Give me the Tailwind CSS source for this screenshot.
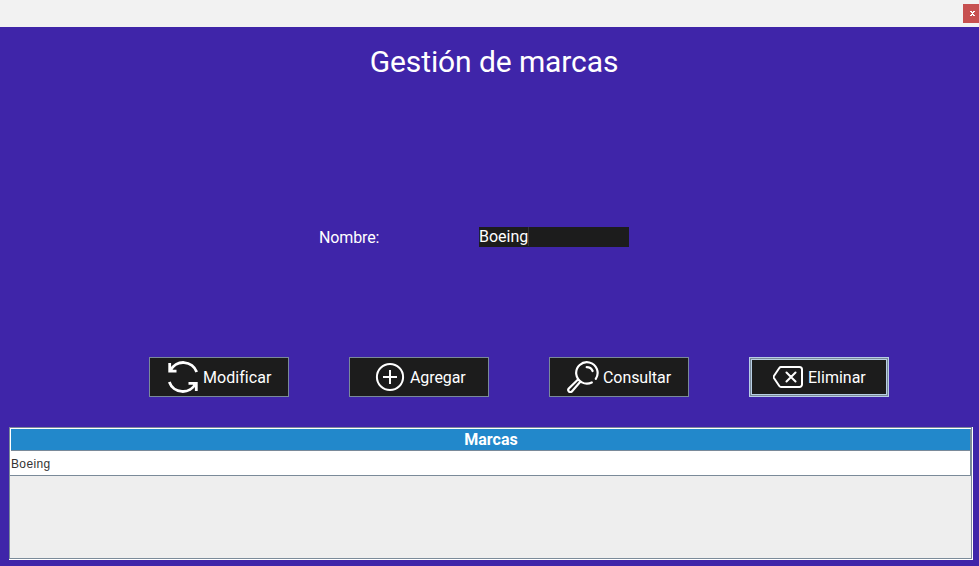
<!DOCTYPE html>
<html lang="es">
<head>
<meta charset="utf-8">
<title>Gestión de marcas</title>
<script src="https://cdn.jsdelivr.net/npm/@tailwindcss/browser@4"></script>
</head>
<body class="flex h-[566px] w-[979px] flex-col overflow-hidden bg-[#3f25a9] font-[Roboto,sans-serif] text-white">
  <header class="flex h-[27px] shrink-0 justify-end bg-[#f2f2f2] pt-1">
    <button class="flex h-[19px] w-4 items-center justify-center bg-[#c75050]" aria-label="Cerrar">
      <svg class="ml-[2px] h-[5px] w-[5px]" viewBox="0 0 5 5" shape-rendering="crispEdges" fill="#fff"><path d="M0 0h2v1H0zM3 0h2v1H3zM1 1h3v1H1zM2 2h1v1H2zM1 3h3v1H1zM0 4h2v1H0zM3 4h2v1H3z"/></svg>
    </button>
  </header>
  <main class="flex grow flex-col">
    <h1 class="mt-[15px] h-10 pl-[9px] text-center text-[30px] leading-[40px] tracking-[-0.1px]">Gestión de marcas</h1>
    <div class="mt-[145px] flex h-5 pl-[319px] text-base leading-5">
      <label class="w-[160px] pt-px tracking-[-0.12px]">Nombre:</label>
      <div class="flex h-5 w-[150px] bg-[#1c1c1c]"><span class="leading-[19px]">Boeing</span><span class="h-[19px] w-px bg-[#353535]"></span></div>
    </div>
    <div class="mt-[110px] flex h-10 gap-[60px] pl-[149px] text-base">
      <button class="flex h-10 w-[140px] items-center border border-[#7a8a99] bg-[#1c1c1c] pl-[17px]">
        <svg class="h-8 w-8 shrink-0" viewBox="0 0 32 32" fill="none" stroke="#fff" stroke-width="2.800"><path d="M3.400 9.500A14.300 14.300 0 0 1 29.700 11M2.700 2v8.200H9.500M28.600 22.500A14.300 14.300 0 0 1 2.300 21M21.500 22.300h7.800V30"/></svg>
        <span class="ml-1 pt-[2px] tracking-[0.06px]">Modificar</span>
      </button>
      <button class="flex h-10 w-[140px] items-center border border-[#7a8a99] bg-[#1c1c1c] pl-6">
        <svg class="h-8 w-8 shrink-0" viewBox="0 0 32 32" fill="none" stroke="#fff" stroke-width="2"><circle cx="16" cy="16" r="13.100"/><path d="M9 16h14M16 9v14"/></svg>
        <span class="ml-1 pt-[2px] tracking-[-0.1px]">Agregar</span>
      </button>
      <button class="flex h-10 w-[140px] items-center border border-[#7a8a99] bg-[#1c1c1c] pl-[17px]">
        <svg class="h-8 w-8 shrink-0" viewBox="0 0 32 32" fill="none" stroke="#fff" stroke-width="2.200" stroke-linecap="round"><path d="M24.800 21.400A10.700 10.700 0 1 1 28.800 17.800M19.700 6.200c2.800 0 4.900 1.500 5.900 3.800M11 18.500L1.800 27.500c-1.700 2 .9 4.700 2.900 3.100L13.500 20.500M11 18.500l2.500 2M12.300 19.300"/></svg>
        <span class="ml-1 pt-[2px] tracking-[-0.08px]">Consultar</span>
      </button>
      <button class="h-10 w-[140px] border border-[#b8cfe5] bg-[#1c1c1c]">
        <span class="flex h-[38px] items-center border border-[#7a8a99]">
          <span class="flex h-9 grow items-center border border-[#b8cfe5] pl-[21px]">
            <svg class="h-8 w-8 shrink-0" viewBox="0 0 32 32" fill="none" stroke="#fff" stroke-width="2" stroke-linejoin="round" stroke-linecap="round"><path d="M8 6h18.500a2.500 2.500 0 0 1 2.500 2.500v15a2.500 2.500 0 0 1-2.500 2.500H8q-1 0-1.700-1L.9 17q-.6-1 0-2l5.400-8q.7-1 1.700-1zM13.500 11.500l9 9M22.500 11.500l-9 9"/></svg>
            <span class="ml-[3px] pt-[2px]">Eliminar</span>
          </span>
        </span>
      </button>
    </div>
    <section class="mt-[30px] ml-[9px] h-[133px] w-[964px] border-r border-b border-white">
      <div class="flex h-[132px] flex-col border border-[#7a8a99] bg-[#eeeeee]">
        <div class="h-[23px] border-t border-l border-white">
          <div class="h-[22px] border-r border-b border-[#7a8a99] bg-[#2288cb] pl-px text-center text-base leading-[21px] font-bold">Marcas</div>
        </div>
        <div class="h-[25px] w-[961px] border-r border-b border-[#7a8a99] bg-white pl-px font-['Liberation_Sans',sans-serif] text-xs leading-[27px] tracking-[0.35px] text-[#333]">Boeing</div>
      </div>
    </section>
  </main>
</body>
</html>
